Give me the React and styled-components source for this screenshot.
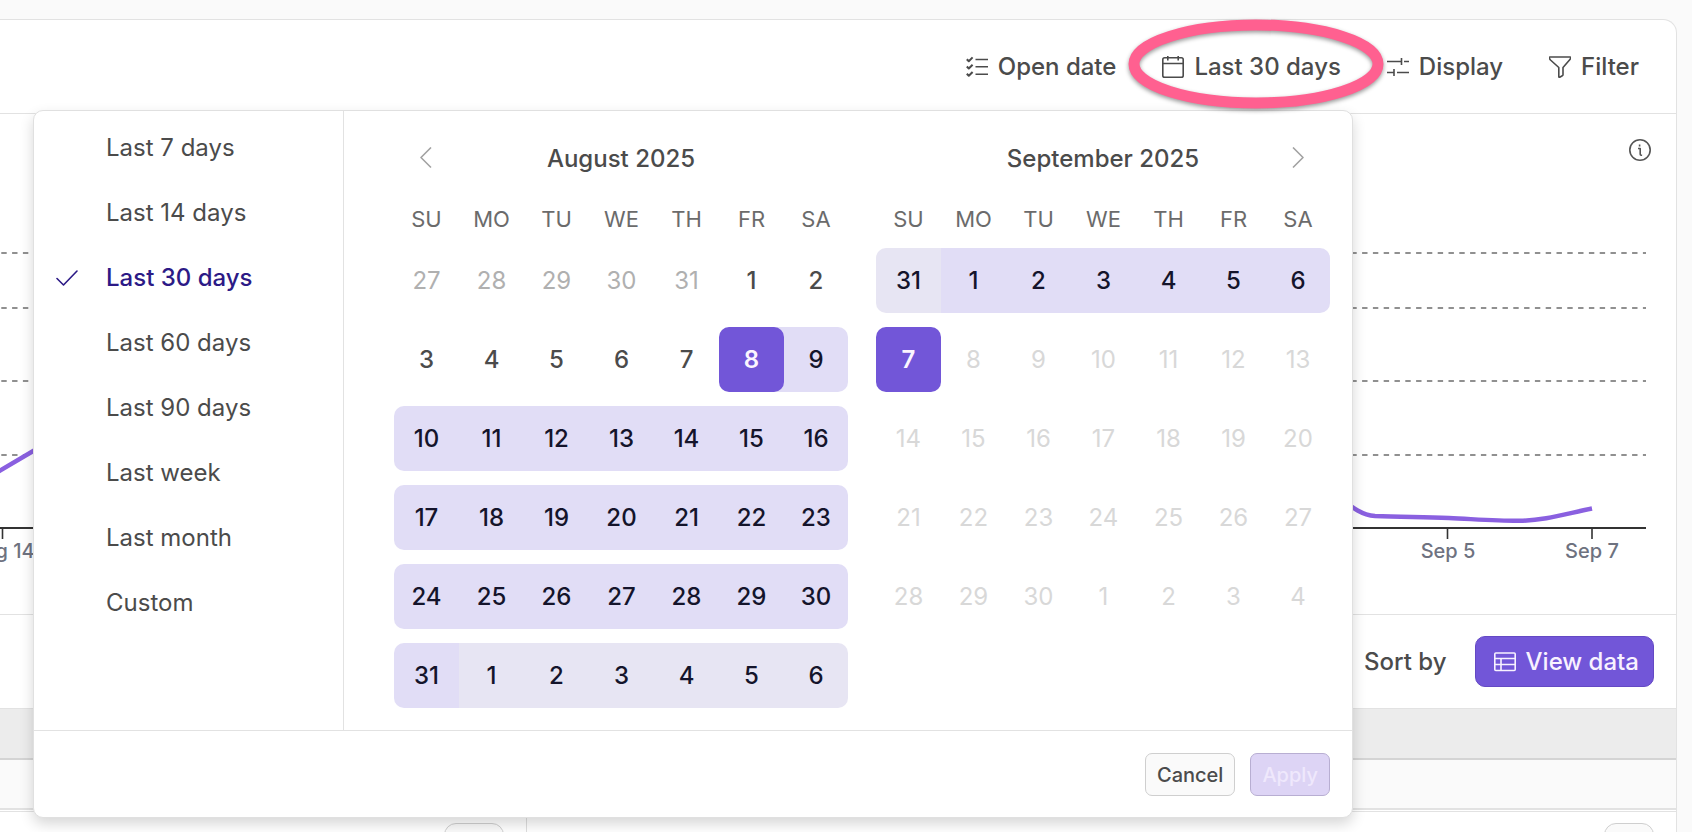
import React, { useState } from 'react';
import styled, { createGlobalStyle, css } from 'styled-components';

//=-=-=-=-=-=-=-=-=-=-=-= DATA =-=-=-=-=-=-=-=-=-=-=-=
const PRESETS = [
    'Last 7 days',
    'Last 14 days',
    'Last 30 days',
    'Last 60 days',
    'Last 90 days',
    'Last week',
    'Last month',
    'Custom',
];

const WEEKDAYS = ['SU', 'MO', 'TU', 'WE', 'TH', 'FR', 'SA'];

const START = new Date(2025, 7, 8);
const END = new Date(2025, 8, 7);

// full weeks that cover the month, with the days that spill over on both sides
function getWeeks(year, month) {
    const first = new Date(year, month, 1);
    const total = new Date(year, month + 1, 0).getDate();
    const count = Math.ceil((first.getDay() + total) / 7);

    return Array.from({ length: count }, (_, week) =>
        WEEKDAYS.map((_, day) => new Date(year, month, 1 - first.getDay() + week * 7 + day))
    );
}

function getKind(date, month) {
    const outside = date.getMonth() !== month;
    const time = date.getTime();

    if (time > END.getTime()) return 'disabled';
    if (time < START.getTime()) return outside ? 'outside' : 'plain';
    if (outside) return 'rangeOutside';
    if (time === START.getTime() || time === END.getTime()) return 'edge';
    return 'range';
}

//=-=-=-=-=-=-=-=-=-=-=-= STYLES =-=-=-=-=-=-=-=-=-=-=-=
const GlobalStyle = createGlobalStyle`
    * {
        box-sizing: border-box;
    }
    body {
        margin: 0;
        background: #fafafa;
        color: #4b4b4b;
        font-family: Inter, "Liberation Sans", sans-serif;
        font-size: 24px;
    }
    button {
        margin: 0;
        padding: 0;
        border: 0;
        background: none;
        color: inherit;
        font: inherit;
        cursor: pointer;
    }
`;

const Page = styled.div`
    position: relative;
    height: 100vh;
    overflow: hidden;
    padding: 19px 15px 0 0;
`;

const Card = styled.main`
    display: flex;
    flex-direction: column;
    min-height: 100%;
    background: #fff;
    border: 1px solid #e2e2e2;
    border-width: 1px 1px 0 0;
    border-top-right-radius: 14px;
`;

const Toolbar = styled.header`
    display: flex;
    flex: none;
    align-items: center;
    justify-content: flex-end;
    gap: 46px;
    height: 94px;
    padding-right: 37px;
    border-bottom: 1px solid #e2e2e2;
`;

const ToolButton = styled.button`
    position: relative;
    display: flex;
    align-items: center;
    gap: 10px;
    line-height: 30px;
    font-weight: 500;
    white-space: nowrap;
`;

const Icon = styled.svg`
    flex: none;
    width: 22px;
    height: 22px;
    fill: none;
    stroke: currentColor;
    stroke-width: 1.6;
    stroke-linecap: ${props => props.$cap || 'butt'};
    stroke-linejoin: round;
`;

const Highlight = styled.svg`
    position: absolute;
    z-index: 3;
    left: 50%;
    top: 50%;
    width: 260px;
    height: 94px;
    margin: -50px 0 0 -126px;
    overflow: visible;
    pointer-events: none;
    filter: drop-shadow(0 2px 2px rgba(0, 0, 0, .4));
`;

const ChartPanel = styled.section`
    display: flex;
    flex: none;
    flex-direction: column;
    align-items: flex-end;
    height: 501px;
    padding: 25px 25px 0 0;
    overflow: hidden;
    border-bottom: 1px solid #e2e2e2;
`;

const InfoButton = styled.button`
    display: flex;
    color: #555;
`;

const Chart = styled.svg`
    flex: none;
    width: 1651px;
    height: 440px;
    fill: none;
    text {
        fill: #6e7280;
        font-size: 20px;
        font-weight: 500;
        text-anchor: middle;
    }
`;

const SortBar = styled.div`
    display: flex;
    flex: none;
    align-items: center;
    justify-content: flex-end;
    gap: 28px;
    height: 93px;
    padding-right: 22px;
`;

const PrimaryButton = styled.button`
    display: flex;
    align-items: center;
    gap: 10px;
    height: 51px;
    padding: 0 14px 0 18px;
    border: 1px solid #6449c4;
    border-radius: 10px;
    background: #7256d8;
    color: #f8f2ff;
    font-weight: 500;
`;

const Band = styled.div`
    flex: none;
    height: ${props => props.$height};
    background: ${props => props.$fill};
    border-top: ${props => props.$top || '0'};
    border-bottom: 2px solid ${props => props.$line};
`;

const Columns = styled.div`
    display: grid;
    grid-template-columns: 527px 1fr;
    flex: 1;
    margin-top: 1px;
    border-top: 1px solid #e2e2e2;
`;

const Column = styled.div`
    display: flex;
    justify-content: flex-end;
    padding: 11px 22px 0 0;
    border-right: ${props => (props.$divided ? '1px solid #dedede' : '0')};
`;

const Pill = styled.button`
    width: ${props => props.$width};
    height: 42px;
    border: 1px solid #cfcfcf;
    border-radius: 12px;
    background: #fafafa;
`;

const Popup = styled.div`
    position: absolute;
    z-index: 2;
    left: 33px;
    top: 110px;
    background: #fff;
    border: 1px solid #e0e0e0;
    border-radius: 10px;
    box-shadow: 0 6px 14px rgba(0, 0, 0, .16);
`;

const PopupBody = styled.div`
    display: flex;
`;

const Presets = styled.div`
    display: flex;
    flex-direction: column;
    width: 310px;
    padding-top: 4px;
    border-right: 1px solid #e2e2e2;
`;

const Preset = styled.button`
    display: grid;
    grid-template-columns: 22px 1fr;
    align-items: center;
    column-gap: 28px;
    height: 65px;
    padding-left: 22px;
    text-align: left;
    color: ${props => (props.$active ? '#2c1a86' : 'inherit')};
    font-weight: ${props => (props.$active ? 500 : 400)};
`;

const PresetLabel = styled.span`
    grid-column: 2;
`;

const Months = styled.div`
    display: flex;
    gap: 28px;
    padding: 0 22px 8px 50px;
`;

const MonthHeader = styled.div`
    display: grid;
    grid-template-columns: 65px 1fr 65px;
    align-items: center;
    height: 94px;
`;

const MonthTitle = styled.h2`
    grid-column: 2;
    margin: 0;
    font-size: 24px;
    font-weight: 500;
    text-align: center;
`;

const Arrow = styled.button`
    display: flex;
    justify-content: center;
    color: #a2a2a2;
`;

const Days = styled.table`
    width: 454px;
    table-layout: fixed;
    border-spacing: 0;
    th {
        height: 43px;
        padding: 0 0 15px;
        color: #6b6b6b;
        font-size: 22px;
        line-height: 28px;
        font-weight: 400;
    }
    th:not(:last-child) {
        width: 65px;
    }
    td {
        padding: 0 0 14px;
    }
`;

const kinds = {
    plain: css`color: #4b4b4b;`,
    outside: css`color: #b0b0b0;`,
    disabled: css`color: #d8d8d8;`,
    range: css`background: #e1ddf6; color: #14142b;`,
    rangeOutside: css`background: #e7e5f3; color: #14142b;`,
    edge: css`background: #7256d8; color: #fbf5ff;`,
};

const Day = styled.button`
    display: block;
    width: 100%;
    height: 65px;
    font-weight: 500;
    ${props => kinds[props.$kind]}
    ${props => ['outside', 'disabled'].includes(props.$kind) && css`font-weight: 400;`}
    ${props => props.$first && css`border-radius: 10px 0 0 10px;`}
    ${props => props.$last && css`border-radius: 0 10px 10px 0;`}
    ${props => props.$kind === 'edge' && css`border-radius: 10px; font-weight: 600;`}
`;

// the selected start sits on the range colour so its right corners blend in
const DayCell = styled.div`
    background: ${props => (props.$joined ? 'linear-gradient(to right, #fff 50%, #e1ddf6 50%)' : 'none')};
`;

const PopupFooter = styled.div`
    display: flex;
    justify-content: flex-end;
    gap: 15px;
    padding: 22px 22px 21px;
    border-top: 1px solid #e2e2e2;
`;

const FooterButton = styled.button`
    height: 43px;
    padding: 0 11px;
    border: 1px solid #cfcfcf;
    border-radius: 7px;
    background: #fafafa;
    font-size: 20px;
    font-weight: 500;
    &:disabled {
        border-color: #b8aed2;
        background: #ddd4f5;
        color: #efe8fc;
        cursor: default;
    }
`;

//=-=-=-=-=-=-=-=-=-=-=-= COMPONENTS =-=-=-=-=-=-=-=-=-=-=-=
function Month({ year, month, title, arrow }) {
    return (
        <section>
            <MonthHeader>
                {arrow === 'left' && (
                    <Arrow type="button" aria-label="Previous month">
                        <Icon viewBox="0 0 22 22"><path d="M15 .5 5 10.500l10 10" /></Icon>
                    </Arrow>
                )}
                <MonthTitle>{title}</MonthTitle>
                {arrow === 'right' && (
                    <Arrow type="button" aria-label="Next month">
                        <Icon viewBox="0 0 22 22"><path d="m6 .5 10 10-10 10" /></Icon>
                    </Arrow>
                )}
            </MonthHeader>

            <Days aria-label={title}>
                <thead>
                    <tr>
                        {WEEKDAYS.map(day => <th key={day} scope="col">{day}</th>)}
                    </tr>
                </thead>
                <tbody>
                    {getWeeks(year, month).map((week, i) => (
                        <tr key={i}>
                            {week.map((date, j) => {
                                const kind = getKind(date, month);
                                return (
                                    <td key={j}>
                                        <DayCell $joined={kind === 'edge' && j > 0}>
                                            <Day
                                                type="button"
                                                disabled={kind === 'disabled'}
                                                $kind={kind}
                                                $first={j === 0}
                                                $last={j === 6}
                                            >
                                                {date.getDate()}
                                            </Day>
                                        </DayCell>
                                    </td>
                                );
                            })}
                        </tr>
                    ))}
                </tbody>
            </Days>
        </section>
    );
}

function TrendChart() {
    return (
        <Chart viewBox="0 161 1651 440" role="img" aria-label="Trend from Aug 14 to Sep 7">
            <g stroke="#909090" strokeWidth="1.8" strokeDasharray="5.4 5.4">
                {[253, 308, 381, 455].map(y => <path key={y} d={`M1.3 ${y}H1646`} />)}
            </g>
            <path d="M0 528H1646" stroke="#333" strokeWidth="2" />
            <path d="M2.5 528v11M1447.5 528v11M1592 528v11" stroke="#333" strokeWidth="1.6" />
            <path d="M-20 483 0 470.5 40 447" stroke="#8a60e0" strokeWidth="4.5" />
            <path
                d="M1340 498C1353 508 1362 515 1375 516C1400 517 1420 517 1449 518C1480 519.500 1500 521 1520 520.800C1545 520.500 1565 514 1592 508.500"
                stroke="#8a60e0"
                strokeWidth="4.5"
            />
            <text x="2" y="558">Aug 14</text>
            <text x="1448" y="558">Sep 5</text>
            <text x="1592" y="558">Sep 7</text>
        </Chart>
    );
}

function DatePopup() {
    const [active, setActive] = useState('Last 30 days');

    return (
        <Popup role="dialog" aria-label="Date range">
            <PopupBody>
                <Presets>
                    {PRESETS.map(name => (
                        <Preset
                            key={name}
                            type="button"
                            $active={name === active}
                            aria-pressed={name === active}
                            onClick={() => setActive(name)}
                        >
                            {name === active && (
                                <Icon viewBox="0 0 22 22" $cap="round"><path d="M1 11.500 7.500 18 21 4" /></Icon>
                            )}
                            <PresetLabel>{name}</PresetLabel>
                        </Preset>
                    ))}
                </Presets>

                <Months>
                    <Month year={2025} month={7} title="August 2025" arrow="left" />
                    <Month year={2025} month={8} title="September 2025" arrow="right" />
                </Months>
            </PopupBody>

            <PopupFooter>
                <FooterButton type="button">Cancel</FooterButton>
                <FooterButton type="button" disabled>Apply</FooterButton>
            </PopupFooter>
        </Popup>
    );
}

function App() {
    return (
        <Page>
            <GlobalStyle />

            <Card>
                <Toolbar>
                    <ToolButton type="button">
                        <Icon viewBox="0 0 22 22">
                            <path d="M9.500 3.500H22M9.500 10.800H22M9.500 18.200H22" />
                            <path strokeWidth="2" d="M.8 3.200 2.800 5.200 6.600 1.400M.8 10.500l2 2 3.800-3.800M.8 17.800l2 2L6.600 16" />
                        </Icon>
                        Open date
                    </ToolButton>
                    <ToolButton type="button" aria-expanded="true">
                        <Icon viewBox="0 0 22 22">
                            <rect x=".8" y="1.800" width="20.400" height="19.400" rx="1.800" />
                            <path d="M.8 7.500h20.400M5.800 0v4.500M16.200 0v4.500" />
                        </Icon>
                        Last 30 days
                        <Highlight viewBox="0 0 260 94" aria-hidden="true">
                            <ellipse cx="130" cy="47" rx="122" ry="39" fill="none" stroke="#ff6090" strokeWidth="11" />
                        </Highlight>
                    </ToolButton>
                    <ToolButton type="button">
                        <Icon viewBox="0 0 22 22">
                            <path d="M0 5.500h14.500M14.500 2v7M17 5.500h5M0 16.500h7M7 13v7M10 16.500h12" />
                        </Icon>
                        Display
                    </ToolButton>
                    <ToolButton type="button">
                        <Icon viewBox="0 0 22 22">
                            <path d="M1 1h20q1 0 .6 1.200-.3.900-1.100 1.800L14 11.500v7.300q0 .7-.7 1l-2.600 1.400q-.9.400-.9-.6v-9.100L1.500 4Q.7 3.100.4 2.200 0 1 1 1z" />
                        </Icon>
                        Filter
                    </ToolButton>
                </Toolbar>

                <ChartPanel>
                    <InfoButton type="button" aria-label="Chart info">
                        <Icon viewBox="0 0 22 22">
                            <circle cx="11" cy="11" r="10.200" />
                            <path d="M9 9.500h2.200v5.800q0 .9.900.9h1M10.600 5.500v2" />
                        </Icon>
                    </InfoButton>
                    <TrendChart />
                </ChartPanel>

                <SortBar>
                    <ToolButton type="button">
                        <Icon viewBox="0 0 22 22">
                            <path d="M6 20V2M1.500 6.500 6 2l4.500 4.500M16 2v18M11.500 15.500 16 20l4.500-4.500" />
                        </Icon>
                        Sort by
                    </ToolButton>
                    <PrimaryButton type="button">
                        <Icon viewBox="0 0 22 22">
                            <rect x=".8" y="2" width="20.400" height="17.500" rx="1" />
                            <path d="M.8 7.500h20.400M.8 13.500h20.400M7 7.500v12" />
                        </Icon>
                        View data
                    </PrimaryButton>
                </SortBar>

                <Band $height="52px" $fill="#ececec" $line="#d4d4d4" $top="1px solid #e2e2e2" />
                <Band $height="50px" $fill="#fafafa" $line="#e2e2e2" />
                <Columns>
                    <Column $divided><Pill type="button" aria-label="Row options" $width="60px" /></Column>
                    <Column><Pill type="button" aria-label="Column options" $width="50px" /></Column>
                </Columns>
            </Card>

            <DatePopup />
        </Page>
    );
}

export default App;
